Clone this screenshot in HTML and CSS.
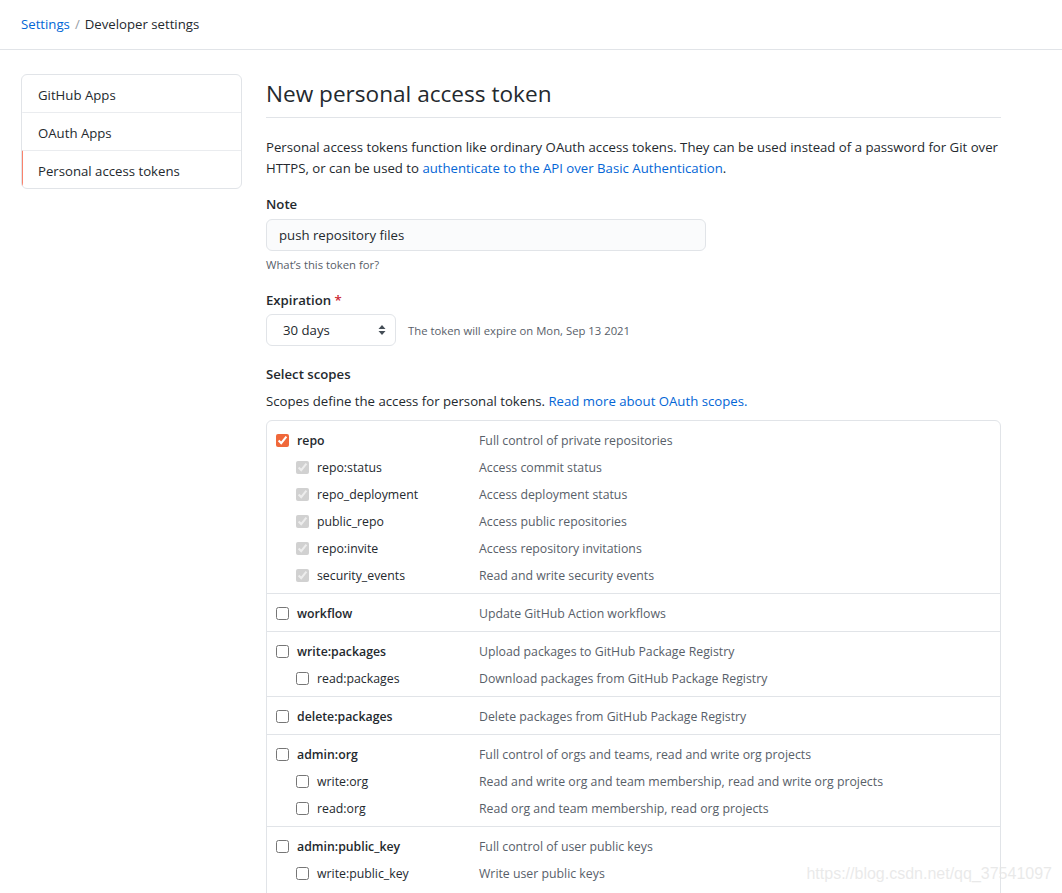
FILE: index.html
```html
<!DOCTYPE html>
<html lang="en">
<head>
<meta charset="utf-8">
<title>New personal access token</title>
<link rel="stylesheet" href="styles.css">
</head>
<body>
<header class="topbar">
  <nav class="crumbs"><a href="#" class="link">Settings</a><span class="sep">/</span><span>Developer settings</span></nav>
</header>
<div class="layout">
  <aside class="menu">
    <a href="#" class="menu-item">GitHub Apps</a>
    <a href="#" class="menu-item">OAuth Apps</a>
    <a href="#" class="menu-item active">Personal access tokens</a>
  </aside>
  <main class="main">
    <h1 class="subhead">New personal access token</h1>
    <p class="intro">Personal access tokens function like ordinary OAuth access tokens. They can be used instead of a password for Git over HTTPS, or can be used to <a href="#" class="link">authenticate to the API over Basic Authentication</a>.</p>

    <div class="field field-note">
      <label class="label">Note</label>
      <div class="input">push repository files</div>
      <p class="note">What’s this token for?</p>
    </div>

    <div class="field">
      <label class="label">Expiration <span class="req">*</span></label>
      <div class="exp-row">
        <div class="select"><span>30 days</span>
          <svg class="updown" width="8" height="12" viewBox="0 0 8 12"><path d="M4 1 L7.5 5 L0.5 5 Z M4 11 L7.5 7 L0.5 7 Z" fill="#444d56"/></svg>
        </div>
        <span class="exp-note">The token will expire on Mon, Sep 13 2021</span>
      </div>
    </div>

    <div class="field field-scopes">
      <label class="label">Select scopes</label>
      <p class="scopes-desc">Scopes define the access for personal tokens. <a href="#" class="link">Read more about OAuth scopes.</a></p>
    </div>

    <div class="scopes">
      <div class="group">
        <div class="row parent"><span class="name"><input type="checkbox" checked class="cb"><span>repo</span></span><span class="desc">Full control of private repositories</span></div>
        <div class="row child"><span class="name"><input type="checkbox" checked disabled class="cb"><span>repo:status</span></span><span class="desc">Access commit status</span></div>
        <div class="row child"><span class="name"><input type="checkbox" checked disabled class="cb"><span>repo_deployment</span></span><span class="desc">Access deployment status</span></div>
        <div class="row child"><span class="name"><input type="checkbox" checked disabled class="cb"><span>public_repo</span></span><span class="desc">Access public repositories</span></div>
        <div class="row child"><span class="name"><input type="checkbox" checked disabled class="cb"><span>repo:invite</span></span><span class="desc">Access repository invitations</span></div>
        <div class="row child"><span class="name"><input type="checkbox" checked disabled class="cb"><span>security_events</span></span><span class="desc">Read and write security events</span></div>
      </div>
      <div class="group">
        <div class="row parent"><span class="name"><input type="checkbox" class="cb"><span>workflow</span></span><span class="desc">Update GitHub Action workflows</span></div>
      </div>
      <div class="group">
        <div class="row parent"><span class="name"><input type="checkbox" class="cb"><span>write:packages</span></span><span class="desc">Upload packages to GitHub Package Registry</span></div>
        <div class="row child"><span class="name"><input type="checkbox" class="cb"><span>read:packages</span></span><span class="desc">Download packages from GitHub Package Registry</span></div>
      </div>
      <div class="group">
        <div class="row parent"><span class="name"><input type="checkbox" class="cb"><span>delete:packages</span></span><span class="desc">Delete packages from GitHub Package Registry</span></div>
      </div>
      <div class="group">
        <div class="row parent"><span class="name"><input type="checkbox" class="cb"><span>admin:org</span></span><span class="desc">Full control of orgs and teams, read and write org projects</span></div>
        <div class="row child"><span class="name"><input type="checkbox" class="cb"><span>write:org</span></span><span class="desc">Read and write org and team membership, read and write org projects</span></div>
        <div class="row child"><span class="name"><input type="checkbox" class="cb"><span>read:org</span></span><span class="desc">Read org and team membership, read org projects</span></div>
      </div>
      <div class="group group-last">
        <div class="row parent"><span class="name"><input type="checkbox" class="cb"><span>admin:public_key</span></span><span class="desc">Full control of user public keys</span></div>
        <div class="row child"><span class="name"><input type="checkbox" class="cb"><span>write:public_key</span></span><span class="desc">Write user public keys</span></div>
      </div>
    </div>
  </main>
</div>
<div class="watermark">https://blog.csdn.net/qq_37541097</div>
</body>
</html>
```
FILE: styles.css
```css
html, body {
  margin: 0;
  padding: 0;
  background: #fff;
}
body {
  font-family: "Open Sans", "Noto Sans", sans-serif;
  font-size: 13.2px;
  line-height: 21px;
  color: #24292e;
  overflow: hidden;
  height: 893px;
  position: relative;
}
a { text-decoration: none; }
.link { color: #0366d6; }

.topbar {
  height: 49px;
  border-bottom: 1px solid #e1e4e8;
  display: flex;
  align-items: center;
  padding-left: 21px;
}
.crumbs { display: flex; align-items: center; }
.sep { color: #959da5; margin: 0 5px; }

.layout {
  display: flex;
  align-items: flex-start;
  gap: 24px;
  padding: 24px 0 0 21px;
}
.menu {
  width: 219px;
  flex: none;
  border: 1px solid #e1e4e8;
  border-radius: 6px;
  display: flex;
  flex-direction: column;
  overflow: hidden;
}
.menu-item {
  color: #24292e;
  padding: 10px 16px 6px 15px;
  border-top: 1px solid #eaecef;
  border-left: 2px solid transparent;
  margin-left: -1px;
}
.menu-item:first-child { border-top: 0; }
.menu-item.active { border-left-color: #f9826c; }

.main { width: 735px; flex: none; }
.subhead {
  margin: 5px 0 0;
  font-size: 22.6px;
  line-height: 30px;
  font-weight: 400;
  padding-bottom: 8px;
  border-bottom: 1px solid #e1e4e8;
}
.intro { margin: 19px 0 0; }

.field { margin-top: 16px; }
.field-note { margin-top: 15px; }
.field-scopes { margin-top: 18px; }
.label { display: block; font-weight: 600; }
.req { color: #cb2431; }
.input {
  margin-top: 4px;
  width: 414px;
  height: 30px;
  padding: 0 12px;
  line-height: 30px;
  background: #fafbfc;
  border: 1px solid #e1e4e8;
  border-radius: 6px;
}
.note {
  margin: 5px 0 0;
  font-size: 11.3px;
  line-height: 18px;
  color: #586069;
}
.exp-row { display: flex; align-items: center; gap: 12px; margin-top: 3px; }
.select {
  width: 130px;
  height: 32px;
  box-sizing: border-box;
  border: 1px solid #e1e4e8;
  border-radius: 6px;
  display: flex;
  align-items: center;
  justify-content: space-between;
  padding: 0 9px 0 16px;
}
.updown { display: block; }
.exp-note { font-size: 11.3px; color: #586069; }
.scopes-desc { margin: 6px 0 0; }

.scopes {
  margin-top: 8px;
  border: 1px solid #e1e4e8;
  border-radius: 6px;
  font-size: 12.3px;
}
.group {
  padding: 6px 9px 4px;
  border-top: 1px solid #e1e4e8;
}
.group:first-child { border-top: 0; padding-top: 6px; }
.group-last { padding-bottom: 40px; }
.row { display: flex; align-items: center; height: 27px; }
.name { width: 203px; flex: none; display: flex; align-items: center; }
.parent .name { font-weight: 600; }
.child .name { padding-left: 20px; width: 183px; }
.cb {
  margin: 0 8px 0 0;
  width: 13px;
  height: 13px;
  accent-color: #f0683a;
}
.desc { color: #586069; }

.watermark {
  position: absolute;
  right: 10px;
  bottom: 9px;
  font-family: "Liberation Sans", Arial, sans-serif;
  font-size: 16px;
  color: rgba(230, 230, 230, 0.85);
}
```
